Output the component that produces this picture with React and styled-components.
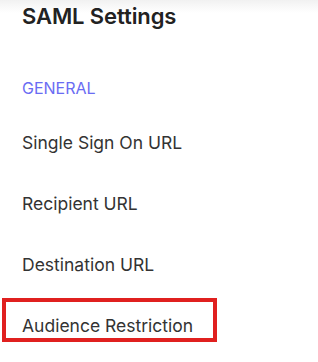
import React from "react";
import styled, { createGlobalStyle } from "styled-components";

const Global = createGlobalStyle`
  html, body { margin: 0; padding: 0; background: #ffffff; }
  body { font-family: Inter, "Noto Sans", Arial, sans-serif; }
`;

const Page = styled.div`
  width: 318px;
  height: 362px;
  overflow: hidden;
  background: linear-gradient(to bottom, #f1f1f1 0px, #f8f8f8 6px, #ffffff 13px);
  display: flex;
  flex-direction: column;
`;

const Title = styled.h1`
  margin: 0;
  padding: 2px 0 0 22px;
  font-size: 22px;
  line-height: 28px;
  font-weight: 600;
  color: #222222;
  letter-spacing: -0.1px;
`;

const Section = styled.div`
  margin-top: 48px;
  padding-left: 22px;
  font-size: 16px;
  line-height: 20px;
  color: #6a6cf3;
  text-transform: uppercase;
`;

const Nav = styled.nav`
  display: flex;
  flex-direction: column;
  align-items: flex-start;
  gap: 17px;
  margin-top: 17px;
  padding-left: 2px;
`;

const Item = styled.div`
  box-sizing: border-box;
  height: 44px;
  display: flex;
  align-items: center;
  padding: 10px 20px 0 16px;
  border: 4px solid ${(p) => (p.$highlighted ? "#e0201f" : "transparent")};
  font-size: 17.5px;
  color: #333333;
  white-space: nowrap;
`;

const items = ["Single Sign On URL", "Recipient URL", "Destination URL", "Audience Restriction"];

export default function App() {
  return (
    <Page>
      <Global />
      <Title>SAML Settings</Title>
      <Section>General</Section>
      <Nav>
        {items.map((t, i) => (
          <Item key={t} $highlighted={i === items.length - 1}>
            {t}
          </Item>
        ))}
      </Nav>
    </Page>
  );
}
